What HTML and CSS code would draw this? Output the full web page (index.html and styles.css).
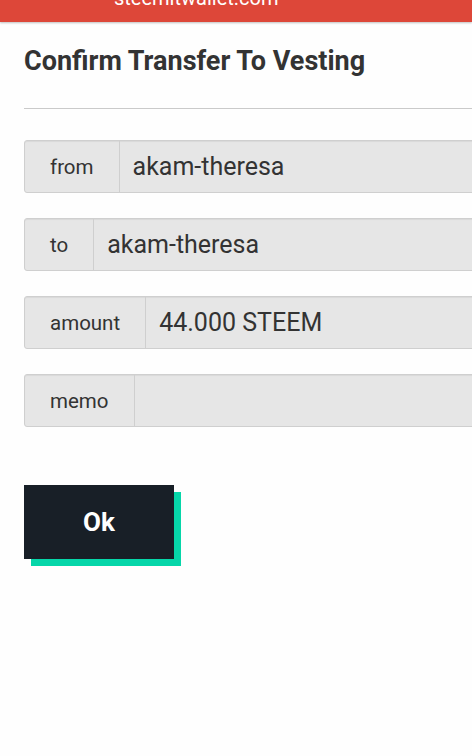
FILE: index.html
```html
<!DOCTYPE html>
<html>
<head>
<meta charset="utf-8">
<link rel="stylesheet" href="styles.css">
</head>
<body>
<div class="topbar"><span class="site">steemitwallet.com</span></div>
<main class="content">
  <h1 class="title">Confirm Transfer To Vesting</h1>
  <hr class="rule">
  <div class="rows">
    <div class="group"><span class="label">from</span><span class="value">akam-theresa</span></div>
    <div class="group"><span class="label">to</span><span class="value">akam-theresa</span></div>
    <div class="group"><span class="label">amount</span><span class="value">44.000 STEEM</span></div>
    <div class="group"><span class="label">memo</span><span class="value"></span></div>
  </div>
  <button class="ok">Ok</button>
</main>
</body>
</html>
```
FILE: styles.css
```css
html, body {
  margin: 0;
  padding: 0;
  background: #fefefe;
  overflow: hidden;
  width: 472px;
  height: 756px;
  font-family: Roboto, "Liberation Sans", sans-serif;
}
.topbar {
  height: 22px;
  background: #dd4739;
  box-shadow: 0 1px 2px rgba(0,0,0,0.25);
  overflow: hidden;
  position: relative;
  z-index: 1;
}
.site {
  display: block;
  color: #fff;
  font-size: 20px;
  line-height: 20px;
  margin-top: -12px;
  padding-left: 114px;
}
.content {
  padding-left: 24px;
  width: 560px;
}
.title {
  margin: 0;
  padding-top: 23px;
  font-size: 27px;
  line-height: 32px;
  font-weight: 700;
  color: #333;
}
.rule {
  margin: 31px 0 0 0;
  border: 0;
  border-top: 1px solid #cacaca;
  height: 0;
}
.rows {
  margin-top: 31px;
  display: flex;
  flex-direction: column;
  gap: 25px;
}
.group {
  display: flex;
  height: 53px;
  box-sizing: border-box;
  border: 1px solid #cfcfcf;
  border-radius: 3px;
  background: #e6e6e6;
  box-shadow: inset 0 1px 1px rgba(0,0,0,0.06);
}
.label {
  display: flex;
  align-items: center;
  padding: 0 25px;
  font-size: 20.5px;
  color: #333;
  border-right: 1px solid #cfcfcf;
}
.value {
  flex: 1;
  display: flex;
  align-items: center;
  padding-left: 13px;
  font-size: 25px;
  color: #333;
}
.ok {
  display: block;
  margin-top: 58px;
  width: 150px;
  height: 74px;
  border: 0;
  background: #181f27;
  color: #fff;
  font-family: Roboto, "Liberation Sans", sans-serif;
  font-size: 26px;
  font-weight: 700;
  box-shadow: 7px 7px 0 #06d6a9;
  padding: 0;
}
```
